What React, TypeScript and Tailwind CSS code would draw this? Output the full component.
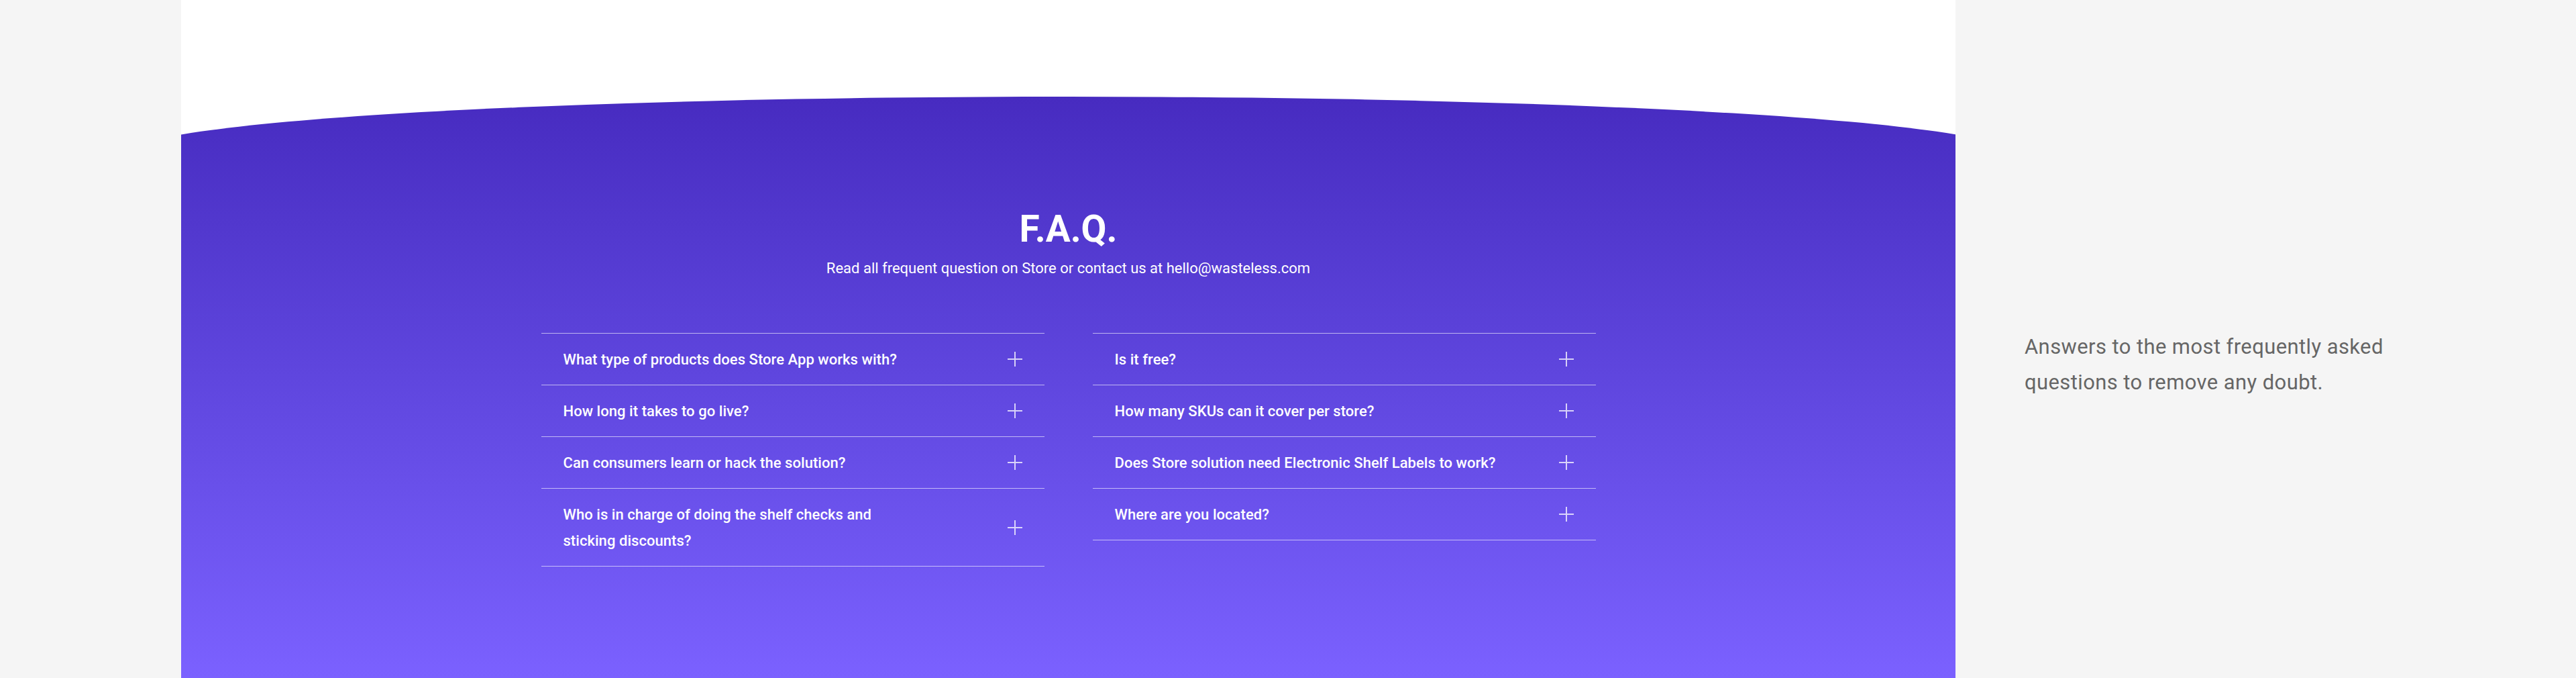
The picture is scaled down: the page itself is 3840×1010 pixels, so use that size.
import { Fragment, ReactNode } from "react";

const left: ReactNode[] = [
  "What type of products does Store App works with?",
  "How long it takes to go live?",
  "Can consumers learn or hack the solution?",
  <Fragment>
    Who is in charge of doing the shelf checks and
    <br />
    sticking discounts?
  </Fragment>,
];

const right: ReactNode[] = [
  "Is it free?",
  "How many SKUs can it cover per store?",
  "Does Store solution need Electronic Shelf Labels to work?",
  "Where are you located?",
];

function PlusIcon() {
  return (
    <svg width="22" height="22" viewBox="0 0 22 22" className="shrink-0 text-white/75">
      <path d="M11 0v22M0 11h22" stroke="currentColor" strokeWidth="2" fill="none" />
    </svg>
  );
}

function FaqColumn({ items }: { items: ReactNode[] }) {
  return (
    <div className="w-[750px] border-b border-white/60">
      {items.map((q, i) => (
        <button
          key={i}
          className="flex w-full items-center justify-between border-t border-white/60 px-[33px] py-[18.5px] text-left"
        >
          <span className="max-w-[600px] text-[22px] font-medium leading-[39px] tracking-[0.05px] text-white">{q}</span>
          <PlusIcon />
        </button>
      ))}
    </div>
  );
}

export default function App() {
  return (
    <div className="flex h-[1010px] w-[3840px] overflow-hidden bg-[#f5f5f5] font-['Roboto',sans-serif]">
      <div className="w-[270px] shrink-0" />

      <section className="flex w-[2645px] shrink-0 flex-col items-center overflow-hidden bg-white pt-[144px]">
        <div className="flex w-[2800px] shrink-0 flex-1 flex-col items-center rounded-t-[1400px_84px] bg-gradient-to-b from-[#472bc0] to-[#7b61ff] pt-[169px]">
          <h2 className="text-[55px] font-bold leading-[56px] text-white">F.A.Q.</h2>
          <p className="mt-[16px] text-[22px] leading-[30px] text-white">
            Read all frequent question on Store or contact us at hello@wasteless.com
          </p>

          <div className="mt-[81px] flex items-start gap-[72px]">
            <FaqColumn items={left} />
            <FaqColumn items={right} />
          </div>
        </div>
      </section>

      <div className="flex-1 pl-[103px] pt-[490px]">
        <p className="w-[580px] text-[31px] leading-[53px] tracking-[0.4px] text-[#666666]">
          Answers to the most frequently asked questions to remove any doubt.
        </p>
      </div>
    </div>
  );
}
